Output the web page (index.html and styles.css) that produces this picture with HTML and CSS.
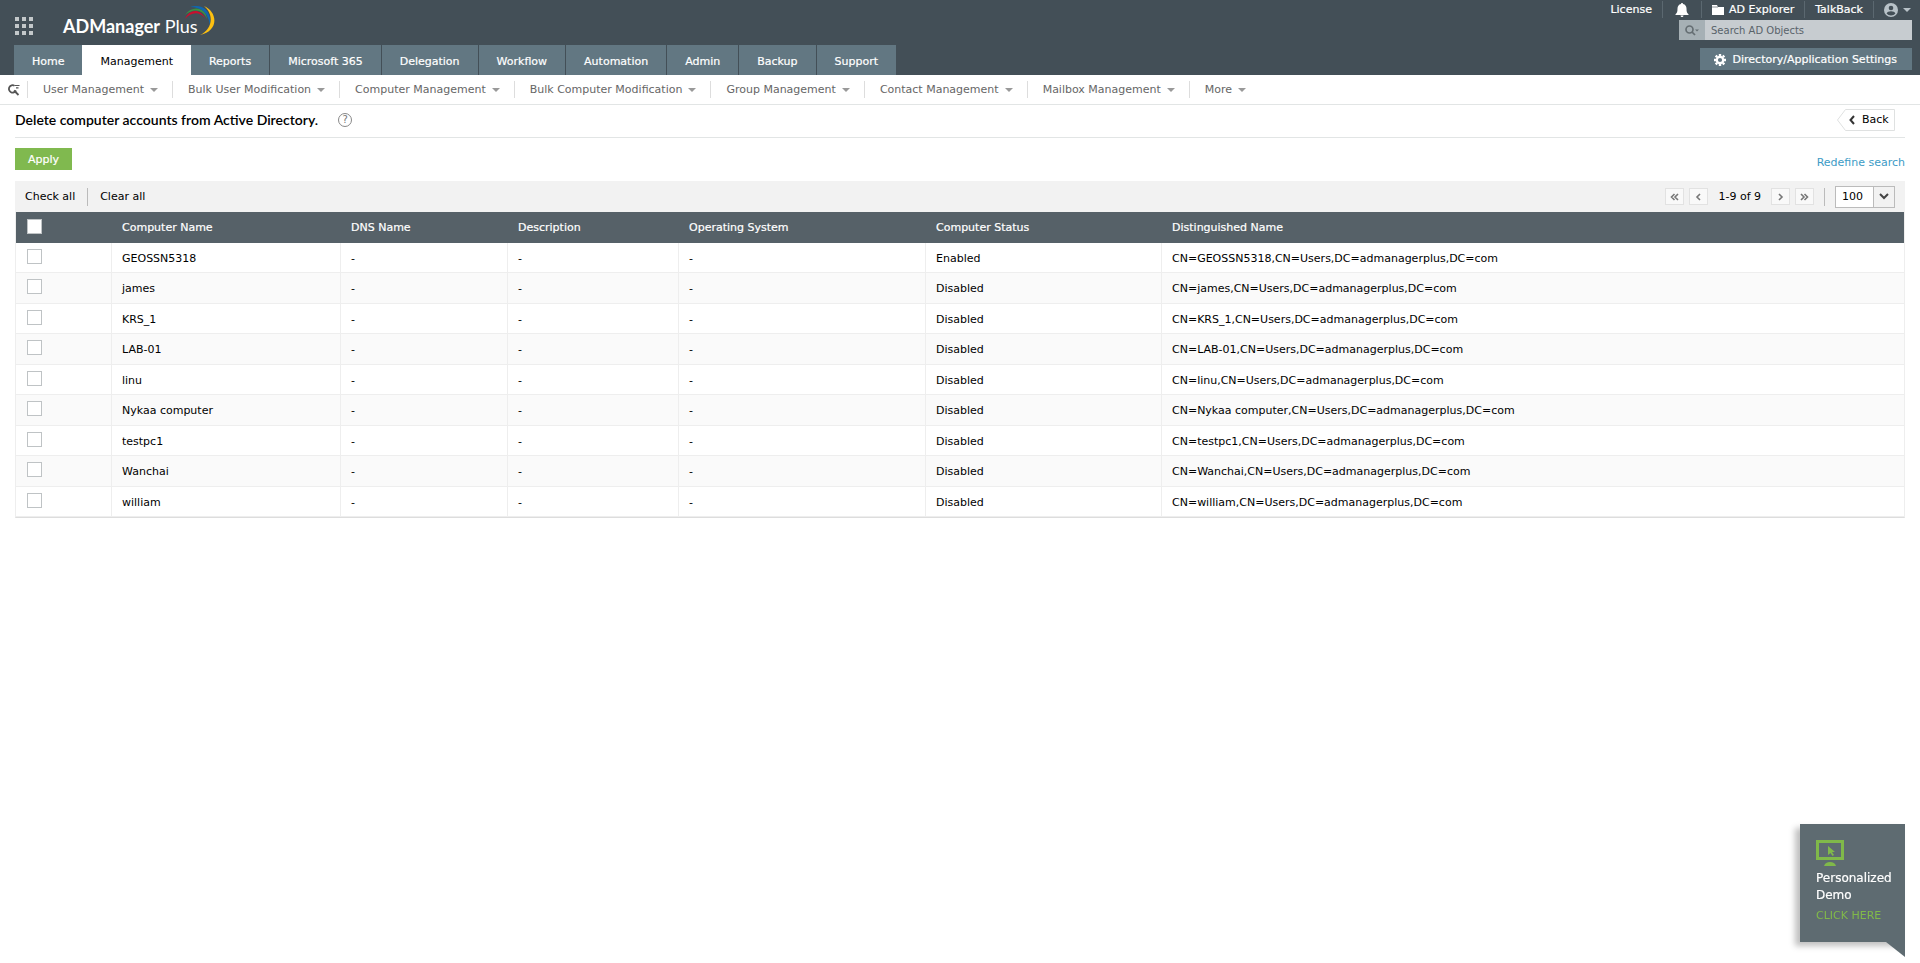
FILE: index.html
```html
<!DOCTYPE html>
<html lang="en">
<head>
    <meta charset="UTF-8">
    <meta name="viewport" content="width=device-width, initial-scale=1.0">
    <title>ADManager Plus</title>
    <link rel="stylesheet" href="styles.css">
</head>
<body>

    <!-- header -->
    <header class="header">
        <div class="header-left">
            <div class="brand">
                <button class="apps-btn" aria-label="Apps">
                    <svg width="18" height="18" viewBox="0 0 18 18" fill="#c3c8ca">
                        <path d="M0 0h4v4H0zM7 0h4v4H7zM14 0h4v4h-4zM0 7h4v4H0zM7 7h4v4H7zM14 7h4v4h-4zM0 14h4v4H0zM7 14h4v4H7zM14 14h4v4h-4z"/>
                    </svg>
                </button>
                <a class="logo" href="#"><b>ADManager</b> Plus
                    <svg class="logo-arc" width="32" height="31" viewBox="0 0 32 31">
                        <path d="M1 14C5 4 16 3 21 13C15 6 7 7 1 14z" fill="#c8102e"/>
                        <path d="M1 10C8 0 22 2 23 14C19 4 9 3 1 10z" fill="#3b9144"/>
                        <path d="M6 2C17-2 28 5 26 20C24 8 18 2 6 2z" fill="#0f68b1"/>
                        <path d="M20 1C34 7 35 26 16 30C29 24 30 9 20 1z" fill="#fdc010"/>
                    </svg>
                </a>
            </div>
            <nav class="tabs">
                <a href="#">Home</a>
                <a href="#" class="active">Management</a>
                <a href="#">Reports</a>
                <a href="#">Microsoft 365</a>
                <a href="#">Delegation</a>
                <a href="#">Workflow</a>
                <a href="#">Automation</a>
                <a href="#">Admin</a>
                <a href="#">Backup</a>
                <a href="#">Support</a>
            </nav>
        </div>
        <div class="header-right">
            <div class="top-links">
                <a href="#">License</a>
                <a href="#" class="bell" aria-label="Notifications">
                    <svg width="14" height="14" viewBox="0 0 14 14" fill="#fff">
                        <path d="M7 0c.8 0 1 .5 1 1c2.400.5 3.500 2.400 3.500 4.500c0 3.500.5 4.500 2 5.800v.7H.500v-.7c1.500-1.300 2-2.300 2-5.800C2.500 3.400 3.600 1.500 6 1c0-.5.200-1 1-1zM5.500 12.500h3c-.2 2-2.800 2-3 0z"/>
                    </svg>
                </a>
                <a href="#">
                    <svg width="12" height="10" viewBox="0 0 12 10" fill="#fff">
                        <path d="M0 0h5l1 2h6v8H0z"/><path d="M0 2h6" stroke="#434f57" stroke-width=".6"/>
                    </svg>
                    AD Explorer
                </a>
                <a href="#">TalkBack</a>
                <a href="#" class="user" aria-label="Account">
                    <svg width="14" height="14" viewBox="0 0 14 14">
                        <circle cx="7" cy="7" r="7" fill="#b8c2c8"/>
                        <circle cx="7" cy="5" r="2.300" fill="#434f57"/>
                        <path d="M2.600 10.500c1-3 7.800-3 8.800 0c-2 2.600-6.800 2.600-8.800 0z" fill="#434f57"/>
                    </svg>
                    <span class="caret caret-light"></span>
                </a>
            </div>
            <div class="search">
                <button class="search-btn" aria-label="Search type">
                    <svg width="14" height="11" viewBox="0 0 14 11" fill="none" stroke="#656e73" stroke-width="1.700">
                        <circle cx="4.500" cy="4.500" r="3.500"/><path d="M7 7l3 3"/><path d="M10 4.500h4l-2 2z" fill="#656e73" stroke="none"/>
                    </svg>
                </button>
                <input type="text" placeholder="Search AD Objects" aria-label="Search AD Objects">
            </div>
            <button class="settings-btn">
                <svg width="12" height="12" viewBox="0 0 12 12" fill="none" stroke="#fff">
                    <circle cx="6" cy="6" r="3.200" stroke-width="2.200"/>
                    <path d="M6 0v2M6 10v2M0 6h2M10 6h2M1.700 1.700l1.500 1.500M8.800 8.800l1.500 1.500M10.300 1.700L8.800 3.200M3.200 8.800l-1.500 1.500" stroke-width="2.400"/>
                </svg>
                Directory/Application Settings
            </button>
        </div>
    </header>

    <!-- sub menu -->
    <nav class="submenu">
        <a href="#" class="submenu-search" aria-label="Search menu">
            <svg width="12" height="12" viewBox="0 0 12 12" fill="none" stroke="#555" stroke-width="1.800">
                <path d="M6.500 1.700A3.700 3.700 0 1 0 8 6.500"/><path d="M6 6.500L10.500 11"/><path d="M6.500 1.500h5M8 3.800h2.500" stroke-width="1.200"/>
            </svg>
        </a>
        <a href="#">User Management <span class="caret"></span></a>
        <a href="#">Bulk User Modification <span class="caret"></span></a>
        <a href="#">Computer Management <span class="caret"></span></a>
        <a href="#">Bulk Computer Modification <span class="caret"></span></a>
        <a href="#">Group Management <span class="caret"></span></a>
        <a href="#">Contact Management <span class="caret"></span></a>
        <a href="#">Mailbox Management <span class="caret"></span></a>
        <a href="#">More <span class="caret"></span></a>
    </nav>

    <main class="content">
        <div class="title-row">
            <h1>Delete computer accounts from Active Directory.</h1>
            <a href="#" class="help">?</a>
            <button class="back-btn">
                <svg class="back-shape" width="58" height="22" viewBox="0 0 58 22" fill="#fff" stroke="#dfe1e1">
                    <path d="M8.500.5h49v21h-49L.500 11z"/>
                </svg>
                <svg class="back-arrow" width="6" height="10" viewBox="0 0 6 10" fill="none" stroke="#333" stroke-width="2">
                    <path d="M5 1L1.500 5L5 9"/>
                </svg>
                <span>Back</span>
            </button>
        </div>

        <div class="action-row">
            <button class="apply-btn">Apply</button>
            <a href="#" class="redefine">Redefine search</a>
        </div>

        <div class="toolbar">
            <a href="#">Check all</a>
            <span class="sep"></span>
            <a href="#">Clear all</a>
            <div class="pager">
                <button aria-label="First page">
                    <svg width="9" height="8" viewBox="0 0 9 8"><path d="M4.500 1l-3 3l3 3M8 1L5 4l3 3"/></svg>
                </button>
                <button aria-label="Previous page">
                    <svg width="9" height="8" viewBox="0 0 9 8"><path d="M6 1L3 4l3 3"/></svg>
                </button>
                <span class="range">1-9 of 9</span>
                <button aria-label="Next page">
                    <svg width="9" height="8" viewBox="0 0 9 8"><path d="M3 1l3 3l-3 3"/></svg>
                </button>
                <button aria-label="Last page">
                    <svg width="9" height="8" viewBox="0 0 9 8"><path d="M1 1l3 3l-3 3M4.500 1l3 3l-3 3"/></svg>
                </button>
                <span class="sep"></span>
                <div class="page-size">
                    <select aria-label="Rows per page">
                        <option>25</option>
                        <option>50</option>
                        <option selected>100</option>
                    </select>
                    <span class="select-arrow">
                        <svg width="10" height="7" viewBox="0 0 10 7" fill="none" stroke="#444" stroke-width="2"><path d="M1 1l4 4l4-4"/></svg>
                    </span>
                </div>
            </div>
        </div>

        <table class="grid">
            <colgroup>
                <col class="col-check">
                <col class="col-name">
                <col class="col-dns">
                <col class="col-desc">
                <col class="col-os">
                <col class="col-status">
                <col>
            </colgroup>
            <thead>
                <tr>
                    <th><input type="checkbox" aria-label="Select all"></th>
                    <th>Computer Name</th>
                    <th>DNS Name</th>
                    <th>Description</th>
                    <th>Operating System</th>
                    <th>Computer Status</th>
                    <th>Distinguished Name</th>
                </tr>
            </thead>
            <tbody>
                <tr>
                    <td><input type="checkbox" aria-label="GEOSSN5318"></td>
                    <td>GEOSSN5318</td><td>-</td><td>-</td><td>-</td><td>Enabled</td>
                    <td>CN=GEOSSN5318,CN=Users,DC=admanagerplus,DC=com</td>
                </tr>
                <tr>
                    <td><input type="checkbox" aria-label="james"></td>
                    <td>james</td><td>-</td><td>-</td><td>-</td><td>Disabled</td>
                    <td>CN=james,CN=Users,DC=admanagerplus,DC=com</td>
                </tr>
                <tr>
                    <td><input type="checkbox" aria-label="KRS_1"></td>
                    <td>KRS_1</td><td>-</td><td>-</td><td>-</td><td>Disabled</td>
                    <td>CN=KRS_1,CN=Users,DC=admanagerplus,DC=com</td>
                </tr>
                <tr>
                    <td><input type="checkbox" aria-label="LAB-01"></td>
                    <td>LAB-01</td><td>-</td><td>-</td><td>-</td><td>Disabled</td>
                    <td>CN=LAB-01,CN=Users,DC=admanagerplus,DC=com</td>
                </tr>
                <tr>
                    <td><input type="checkbox" aria-label="linu"></td>
                    <td>linu</td><td>-</td><td>-</td><td>-</td><td>Disabled</td>
                    <td>CN=linu,CN=Users,DC=admanagerplus,DC=com</td>
                </tr>
                <tr>
                    <td><input type="checkbox" aria-label="Nykaa computer"></td>
                    <td>Nykaa computer</td><td>-</td><td>-</td><td>-</td><td>Disabled</td>
                    <td>CN=Nykaa computer,CN=Users,DC=admanagerplus,DC=com</td>
                </tr>
                <tr>
                    <td><input type="checkbox" aria-label="testpc1"></td>
                    <td>testpc1</td><td>-</td><td>-</td><td>-</td><td>Disabled</td>
                    <td>CN=testpc1,CN=Users,DC=admanagerplus,DC=com</td>
                </tr>
                <tr>
                    <td><input type="checkbox" aria-label="Wanchai"></td>
                    <td>Wanchai</td><td>-</td><td>-</td><td>-</td><td>Disabled</td>
                    <td>CN=Wanchai,CN=Users,DC=admanagerplus,DC=com</td>
                </tr>
                <tr>
                    <td><input type="checkbox" aria-label="william"></td>
                    <td>william</td><td>-</td><td>-</td><td>-</td><td>Disabled</td>
                    <td>CN=william,CN=Users,DC=admanagerplus,DC=com</td>
                </tr>
            </tbody>
        </table>
    </main>

    <!-- demo box -->
    <a href="#" class="demo">
        <svg width="28" height="26" viewBox="0 0 28 26">
            <path d="M0 0h28v20H0zM3 3v14h22V3z" fill="#80b94a" fill-rule="evenodd"/>
            <path d="M8 26c1-3 3-4 6-4s5 1 6 4z" fill="#80b94a"/>
            <path d="M12 6l7 6h-3l2 3l-1.500 1l-2-3l-2.500 2z" fill="#80b94a"/>
        </svg>
        <span class="demo-title">Personalized Demo</span>
        <span class="demo-link">CLICK HERE</span>
    </a>

</body>
</html>
```

FILE: styles.css
```css
* {
    box-sizing: border-box;
}

body {
    margin: 0;
    font-family: Verdana, "DejaVu Sans", sans-serif;
    font-size: 11px;
    line-height: 14px;
    color: #000;
    background: #fff;
}

a {
    color: inherit;
    text-decoration: none;
}

button,
input,
select {
    font: inherit;
    margin: 0;
    padding: 0;
    border: none;
    border-radius: 0;
}

button {
    cursor: pointer;
}

svg {
    display: block;
    flex: none;
}

/* header */
.header {
    display: flex;
    justify-content: space-between;
    background: #434f57;
    color: #fff;
}

.brand {
    display: flex;
    height: 45px;
    padding: 17px 0 0 15px;
}

.apps-btn {
    height: 18px;
    background: none;
}

.logo {
    position: relative;
    margin-left: 30px;
    font-family: Lato, sans-serif;
    font-size: 18px;
    line-height: 18px;
}

.logo-arc {
    position: absolute;
    right: -18px;
    top: -12px;
}

.tabs {
    display: flex;
    padding-left: 14px;
}

.tabs a {
    height: 30px;
    padding: 0 18px;
    line-height: 34px;
    background: #627782;
    border-right: 1px solid #434f57;
    -webkit-text-stroke: 0.2px;
}

.tabs a.active {
    background: #fff;
    color: #000;
    border-right: none;
    -webkit-text-stroke: 0;
}

.tabs a:first-child,
.tabs a:last-child {
    border-right: none;
}

.header-right {
    display: flex;
    flex-direction: column;
    align-items: flex-end;
    padding-right: 8px;
}

.top-links {
    display: flex;
    height: 20px;
    padding-top: 1px;
}

.top-links a {
    display: flex;
    align-items: center;
    gap: 5px;
    height: 17px;
    padding: 0 10px;
    border-right: 1px solid #5b6870;
    -webkit-text-stroke: 0.2px;
}

.top-links .bell {
    padding: 0 12px;
}

.top-links .user {
    padding-right: 1px;
    border-right: none;
}

.search {
    display: flex;
    width: 233px;
    height: 20px;
}

.search-btn {
    width: 26px;
    padding-left: 6px;
    background: #a6b0b5;
}

.search input {
    flex: 1;
    min-width: 0;
    padding: 1px 6px 0;
    background: #c7ccd0;
    font-size: 10px;
}

.search input::placeholder {
    color: #59636a;
    opacity: 1;
}

.settings-btn {
    display: flex;
    align-items: center;
    gap: 7px;
    height: 22px;
    margin-top: 8px;
    padding: 1px 15px 0 14px;
    background: #627782;
    color: #fff;
    -webkit-text-stroke: 0.2px;
}

.caret {
    width: 8px;
    border: 4px solid transparent;
    border-top-color: #999;
    border-bottom: none;
}

.caret-light {
    border-top-color: #b8c2c8;
}

/* sub menu */
.submenu {
    display: flex;
    align-items: center;
    height: 30px;
    border-bottom: 1px solid #e2e5e5;
    color: #666;
}

.submenu a {
    display: flex;
    align-items: center;
    gap: 6px;
    height: 17px;
    padding: 1px 14px 0 15px;
    border-right: 1px solid #ddd;
}

.submenu .submenu-search {
    padding: 0 7px 0 8px;
}

.submenu a:last-child {
    border-right: none;
}

/* content */
.content {
    padding: 0 15px;
}

.title-row {
    display: flex;
    align-items: center;
    height: 33px;
    padding-bottom: 2px;
    border-bottom: 1px solid #e2e5e5;
}

.title-row h1 {
    margin: 0;
    font-family: Lato, sans-serif;
    font-size: 14px;
    font-weight: 600;
    line-height: 18px;
}

.help {
    width: 14px;
    height: 14px;
    margin-left: 20px;
    border: 1px solid #888;
    border-radius: 50%;
    color: #777;
    font-size: 10px;
    line-height: 12px;
    text-align: center;
}

.back-btn {
    position: relative;
    display: flex;
    align-items: center;
    gap: 7px;
    width: 58px;
    height: 22px;
    margin: 0 10px 0 auto;
    padding-left: 12px;
    background: none;
    color: #000;
}

.back-shape {
    position: absolute;
    left: 0;
    top: 0;
}

.back-arrow,
.back-btn span {
    position: relative;
}

.action-row {
    display: flex;
    justify-content: space-between;
    align-items: flex-start;
    height: 43px;
    padding-top: 10px;
}

.apply-btn {
    width: 57px;
    height: 22px;
    padding-top: 1px;
    background: #80b94f;
    color: #fff;
    -webkit-text-stroke: 0.2px;
}

.redefine {
    margin-top: 8px;
    color: #3c9bc6;
}

.toolbar {
    display: flex;
    align-items: center;
    height: 31px;
    padding: 0 10px;
    background: #f2f2f2;
}

.sep {
    width: 1px;
    height: 18px;
    margin: 0 12px;
    background: #bbb;
}

.pager {
    display: flex;
    align-items: center;
    gap: 5px;
    margin-left: auto;
}

.pager button {
    display: flex;
    align-items: center;
    justify-content: center;
    width: 19px;
    height: 17px;
    background: #f9f9f9;
    border: 1px solid #e2e2e2;
}

.pager button svg {
    fill: none;
    stroke: #777;
    stroke-width: 1.6;
}

.pager .range {
    margin: 0 5px;
}

.pager .sep {
    margin: 0 5px;
}

.page-size {
    position: relative;
}

.page-size select {
    display: block;
    width: 60px;
    height: 22px;
    padding: 1px 0 0 6px;
    border: 1px solid #bbb;
    background: #fff;
    color: #000;
    appearance: none;
}

.select-arrow {
    position: absolute;
    top: 1px;
    right: 1px;
    bottom: 1px;
    display: flex;
    align-items: center;
    justify-content: center;
    width: 21px;
    background: #f2f2f2;
    border-left: 1px solid #bbb;
    pointer-events: none;
}

/* table */
.grid {
    width: 100%;
    table-layout: fixed;
    border-collapse: separate;
    border-spacing: 0;
    border: 1px solid #eee;
    border-top: none;
    border-bottom-color: #ddd;
}

.col-check {
    width: 96px;
}

.col-name {
    width: 229px;
}

.col-dns {
    width: 167px;
}

.col-desc {
    width: 171px;
}

.col-os {
    width: 247px;
}

.col-status {
    width: 236px;
}

.grid th {
    height: 31px;
    padding: 0 10px;
    background: #566168;
    color: #fff;
    font-weight: normal;
    text-align: left;
    -webkit-text-stroke: 0.2px;
}

.grid td {
    height: 30px;
    padding: 2px 10px 0;
    border-right: 1px solid #eee;
    border-bottom: 1px solid #eee;
}

.grid td:first-child,
.grid th:first-child {
    padding: 0 11px 1px;
}

.grid tbody tr:nth-child(even) td {
    height: 31px;
    background: #fafafa;
}

.grid td:last-child {
    border-right: none;
}

.grid input {
    display: block;
    width: 15px;
    height: 15px;
    margin-bottom: 2px;
    border: 1px solid #bfc3c5;
    background: #fff;
    appearance: none;
}

.grid input:checked {
    background: #80b94f;
}

/* demo box */
.demo {
    position: fixed;
    right: 15px;
    bottom: 21px;
    width: 105px;
    height: 118px;
    padding: 16px;
    background: #5e6b71;
    box-shadow: -5px 4px 6px rgba(0, 0, 0, 0.25);
    color: #fff;
}

.demo::after {
    content: "";
    position: absolute;
    right: 0;
    top: 100%;
    border-top: 15px solid #5e6b71;
    border-left: 19px solid transparent;
}

.demo-title {
    display: block;
    margin-top: 4px;
    font-size: 12px;
    line-height: 17px;
    -webkit-text-stroke: 0.2px;
}

.demo-link {
    display: block;
    margin-top: 5px;
    color: #80b94a;
}
```
